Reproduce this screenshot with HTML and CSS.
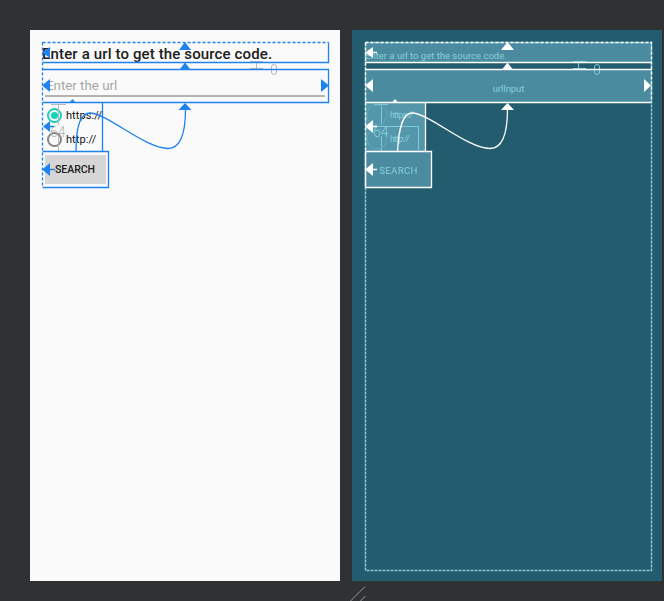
FILE: index.html
```html
<!DOCTYPE html>
<html lang="en">
<head>
<meta charset="utf-8">
<title>Layout editor</title>
<link rel="stylesheet" href="styles.css">
</head>
<body>
<main class="editor">
  <section class="screen design">
    <h1 class="title"><span>Enter a url to get the source code.</span></h1>
    <div class="input"><span>Enter the url</span></div>
    <div class="radios">
      <div class="radio"><i class="dot checked"></i><span>https://</span></div>
      <div class="radio"><i class="dot"></i><span>http://</span></div>
    </div>
    <div class="button"><span>SEARCH</span></div>
    <svg class="overlay" viewBox="30 30 310 551">
      <g class="measure">
        <path d="M250 61.500H263M250 68.500H263M256.500 62V68M51 104.500H66M58.500 105V125M58.500 136V151"/>
        <rect x="271.500" y="64.500" width="5" height="10" rx="2.500"/>
        <text x="50" y="137">64</text>
      </g>
      <g class="lines">
        <path class="dash" d="M42.500 42.500H328.500M42.500 42.500V187"/>
        <path d="M328.500 42.500V62.500H42.500M42.500 69.500H328.500V102.500H42.500M102.500 102.500V151.500M42.500 151.500H108.500V187.500H42.500"/>
        <path d="M76 151C76 126 80 113 90 113C107 113 145 148.500 168 148.500C181 148.500 185.500 132 185.500 109M49 169.500H55M49 126.500H54"/>
      </g>
      <path class="arrows" d="M42 52.500L50 47V58ZM185 42L191 50H179ZM185 62.500L190 69H180ZM42 85.500L50 79V92ZM329 85.500L321 79V92ZM185 103L191.500 110H178.500ZM72.500 99L76 103H69ZM43 126.500L50 121V132ZM42 169.500L50 163V176Z"/>
    </svg>
  </section>
  <section class="screen blueprint">
    <div class="title"><span>Enter a url to get the source code.</span></div>
    <div class="input"><span>urlInput</span></div>
    <div class="radios">
      <div class="radio"><span>https://</span></div>
      <div class="radio"><span>http://</span></div>
    </div>
    <div class="button"><span>SEARCH</span></div>
    <svg class="overlay" viewBox="352 30 310 551">
      <g class="measure">
        <path d="M573 61.500H586M573 68.500H586M578.500 62V68M374 104.500H388M381.500 105V125M381.500 136V151M366 126.500H418.500V151"/>
        <circle class="ghost" cx="377" cy="115" r="10"/>
        <circle class="ghost" cx="377" cy="139" r="10"/>
        <rect x="594.500" y="64.500" width="5" height="10" rx="2.500"/>
        <text x="373" y="137">64</text>
      </g>
      <path class="root" d="M365.500 42.500H651.500V570.500H365.500Z"/>
      <g class="lines">
        <path class="dash" d="M365.500 42.500H651.500V102M365.500 42.500V187"/>
        <path d="M365.500 62.500H651.500M365.500 69.500H651.500M651.500 102.500H365.500M425.500 102.500V151.500M365.500 151.500H431.500V187.500H365.500V151.500"/>
        <path d="M397.500 151C399 126 403 113 412 113C429 113 467 148.500 490 148.500C503 148.500 507.500 132 507.500 109M371 52.500H377M371 169.500H377M371 126.500H377"/>
      </g>
      <path class="arrows" d="M365 52.500L373 47V58ZM507.500 42L514 50H501ZM507.500 62.500L513 69.500H502ZM365 85.500L373 79V92ZM651 85.500L644 79V92ZM507.500 103L514 110H501ZM395 99L398.500 103H391.500ZM365 126.500L373 120V133ZM365 169.500L373 163V176Z"/>
    </svg>
  </section>
</main>
<svg class="resize" viewBox="0 0 16 15"><path d="M0.500 15L15 0.500M10.500 15L15.500 10"/></svg>
</body>
</html>
```
FILE: styles.css
```css
* { box-sizing: border-box; }
body {
  margin: 0;
  height: 601px;
  overflow: hidden;
  background: #303133;
  font-family: Roboto, "Liberation Sans", sans-serif;
}
.editor { display: flex; gap: 12px; padding: 30px 2px 5px 30px; }
.screen {
  position: relative;
  display: flex;
  flex-direction: column;
  align-items: flex-start;
  flex: none;
  width: 310px;
  height: 551px;
  padding: 12px 11px 0 12px;
}
.design { background: #fafafa; color: #202020; }
.blueprint { background: #235c6f; color: #86d0dc; padding: 12px 10px 0 13px; }
.title {
  display: flex;
  align-items: center;
  width: 100%;
  height: 21px;
  margin: 0 0 6px;
  white-space: nowrap;
  font-size: 15px;
  font-weight: 500;
}
.design .title { letter-spacing: 0.130px; padding-top: 3px; }
.input {
  display: flex;
  align-items: center;
  width: 100%;
  height: 34px;
}
.design .input {
  padding: 0 0 2px 4px;
  font-size: 13.300px;
  color: #a5a5a5;
  background: linear-gradient(#b5b2b2, #b5b2b2) 3px 26px / 280px 2px no-repeat;
}
.radios { width: 61px; height: 48px; }
.radio { display: flex; align-items: center; height: 24px; font-size: 11px; }
.design .radio { gap: 4px; padding-left: 5px; color: #111; white-space: nowrap; }
.design .radio span { letter-spacing: 0.060px; }
.dot {
  display: grid;
  place-items: center;
  flex: none;
  width: 15px;
  height: 15px;
  border: 2px solid #858585;
  border-radius: 50%;
}
.dot.checked { border-color: #20ceb7; }
.dot.checked::after {
  content: "";
  width: 7px;
  height: 7px;
  border-radius: 50%;
  background: #10d5bb;
}
.button {
  display: flex;
  align-items: center;
  justify-content: center;
  width: 67px;
  height: 37px;
  font-size: 10.500px;
  font-weight: 500;
}
.design .button {
  padding-right: 1px;
  background: linear-gradient(#d6d6d6, #d6d6d6) 3px 4px / 61px 29px no-repeat;
}
.blueprint .title, .blueprint .input, .blueprint .button { background: #4a8b9f; }
.blueprint .title { font-size: 9.500px; font-weight: 400; padding-top: 6px; letter-spacing: 0; }
.blueprint .input { justify-content: center; padding-top: 5px; font-size: 9.500px; letter-spacing: -0.100px; }
.blueprint .radios { background: #5597aa; }
.blueprint .radio { padding-left: 25px; font-size: 8.500px; letter-spacing: -0.600px; }
.blueprint .button { padding-top: 2px; font-size: 9.500px; font-weight: 400; letter-spacing: 0.400px; }
.overlay { position: absolute; left: 0; top: 0; width: 310px; height: 551px; }
.overlay path, .overlay rect { fill: none; }
.lines { fill: none; stroke: #1e83ee; stroke-width: 1.300; }
.dash { stroke-dasharray: 3 2; }
.design .arrows { fill: #1e83ee; }
.measure { fill: none; stroke: #bababa; stroke-width: 1; }
.measure text { fill: #b4b4b4; stroke: none; font-size: 14px; font-weight: 300; }
.blueprint .lines { stroke: #fff; }
.blueprint .arrows { fill: #fff; }
.blueprint .measure { stroke: #7dcbd9; }
.blueprint .measure text { fill: #86d0dc; }
.measure .ghost { fill: none; stroke: #64a7b8; }
.root { stroke: #8ccad5; stroke-width: 1.500; stroke-dasharray: 3 1; }
.resize { position: absolute; left: 350px; top: 586px; width: 16px; height: 15px; fill: none; stroke: #999; }
```
